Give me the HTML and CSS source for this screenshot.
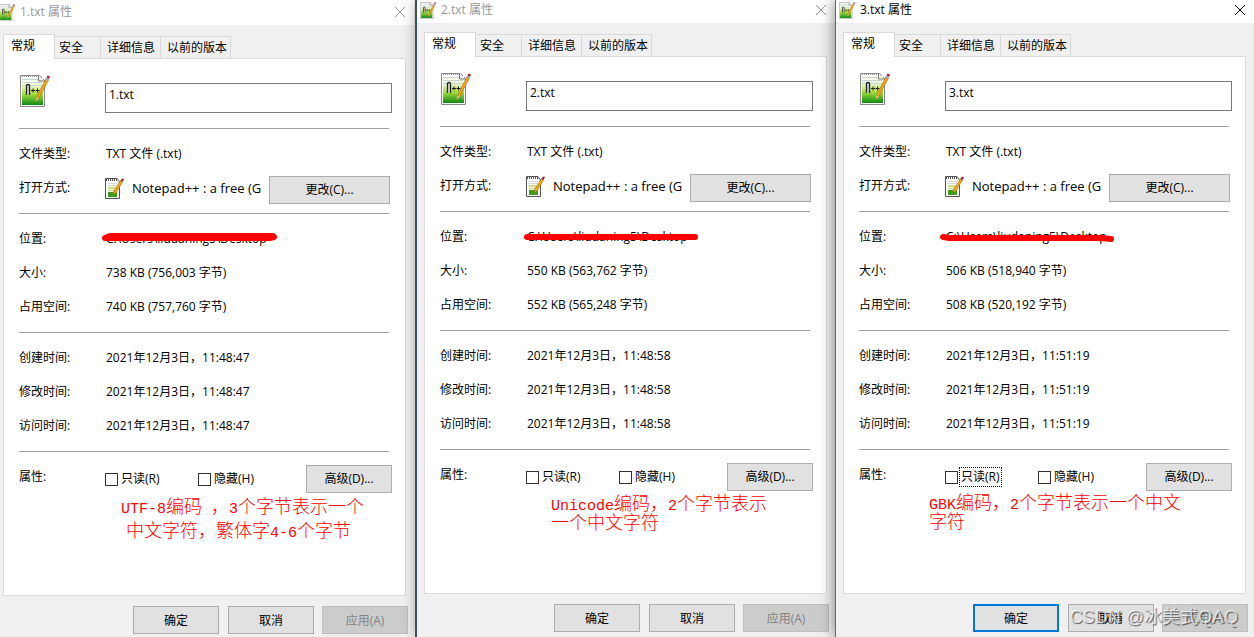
FILE: index.html
```html
<!DOCTYPE html>
<html lang="zh-CN">
<head>
    <meta charset="UTF-8">
    <meta name="viewport" content="width=device-width, initial-scale=1.0">
    <title>文件属性</title>
    <link rel="stylesheet" href="styles.css">
</head>
<body>
    <svg class="sprite" width="0" height="0" aria-hidden="true">
        <defs>
            <linearGradient id="green" x1="0" y1="0" x2="0" y2="1">
                <stop offset="0" stop-color="#ffffff"/>
                <stop offset="0.3" stop-color="#e9f5c8"/>
                <stop offset="0.6" stop-color="#a5dc3c"/>
                <stop offset="1" stop-color="#0b8a12"/>
            </linearGradient>
            <symbol id="notepad" viewBox="0 0 30 32">
                <path d="M0.5 0.5H19.5L24.5 5.5V31.5H0.5Z" fill="#fff" stroke="#8a8a8a"/>
                <rect x="2" y="3" width="21" height="27" fill="url(#green)"/>
                <path d="M2 4.5H18M2 7.5H22M2 10.5H22" stroke="#c4d6dc"/>
                <path d="M2 1.5H18" stroke="#999" stroke-dasharray="1 1"/>
                <path d="M18.500 1V6H24" fill="#eee" stroke="#777"/>
                <path d="M6.500 20V10.500Q6.500 9.500 8 9.500Q9.500 9.500 9.500 11V20" fill="#ddd" stroke="#222" stroke-width="1.300"/>
                <path d="M11 15.500H15M13 13.500V17.500M15.500 15.500H19.500M17.500 13.500V17.500" stroke="#222"/>
                <path d="M15.500 26.500L17 21.500L26 3.500L28.500 5L19 23Z" fill="#eda51b" stroke="#a86a12" stroke-width="0.600"/>
                <path d="M15.500 26.500L16.500 22.500L19 23.500Z" fill="#e5c28c"/>
                <path d="M25.500 4.500L26.500 2.500L29 4L28 6Z" fill="#9aa9bb"/>
                <path d="M26.500 2.500L27.500 0.500L30 1.500L29 4Z" fill="#b02a3c"/>
            </symbol>
            <symbol id="notepad-small" viewBox="0 0 19 21">
                <path d="M0.500 0.500H12L14.500 4V20.500H0.500Z" fill="#fff" stroke="#555"/>
                <path d="M1 2H12" stroke="#555" stroke-width="2" stroke-dasharray="1 1"/>
                <path d="M2 5.500H12M2 7.500H12" stroke="#d5dbdf"/>
                <path d="M3 9H12V18H3Z" fill="#c9dd8f"/>
                <path d="M3 14H12V19H3Z" fill="#3d9c1d"/>
                <path d="M3 11.500H9M3 13.500H8" stroke="#f4f8d0"/>
                <path d="M8 17L9 13L15.500 2.500L17.500 4L11 15Z" fill="#eda51b" stroke="#9b6012" stroke-width="0.500"/>
                <path d="M15.500 3L17 0.500L19 1L17.500 4Z" fill="#9c2433"/>
            </symbol>
            <symbol id="close" viewBox="0 0 12 12">
                <path d="M1 1L11 11M11 1L1 11" fill="none" stroke="currentColor"/>
            </symbol>
        </defs>
    </svg>

    <main class="desktop">
        <section class="window window-first">
            <header class="titlebar">
                <svg class="title-icon"><use href="#notepad"/></svg>
                <h2>1.txt 属性</h2>
                <button class="close" type="button" aria-label="关闭"><svg><use href="#close"/></svg></button>
            </header>
            <nav class="tabs">
                <button class="tab tab-active" type="button">常规</button>
                <button class="tab tab-security" type="button">安全</button>
                <button class="tab tab-details" type="button">详细信息</button>
                <button class="tab tab-versions" type="button">以前的版本</button>
            </nav>
            <div class="panel">
                <div class="file-head">
                    <svg class="file-icon"><use href="#notepad"/></svg>
                    <input class="file-name" type="text" value="1.txt" aria-label="文件名">
                </div>
                <hr>
                <div class="row"><span>文件类型:</span><span class="value">TXT 文件 (.txt)</span></div>
                <div class="row row-open">
                    <span>打开方式:</span>
                    <svg class="app-icon"><use href="#notepad-small"/></svg>
                    <span class="app-name">Notepad++ : a free (G</span>
                    <button class="btn btn-change" type="button">更改(C)...</button>
                </div>
                <hr>
                <div class="row">
                    <span>位置:</span>
                    <span class="value path">C:\Users\liudaning5\Desktop
                        <svg class="scribble" viewBox="0 0 176 12"><path d="M3 5L8 3H171L172 4L168 5H3Z"/></svg>
                    </span>
                </div>
                <div class="row"><span>大小:</span><span class="value">738 KB (756,003 字节)</span></div>
                <div class="row"><span>占用空间:</span><span class="value">740 KB (757,760 字节)</span></div>
                <hr>
                <div class="row"><span>创建时间:</span><span class="value">2021年12月3日，11:48:47</span></div>
                <div class="row"><span>修改时间:</span><span class="value">2021年12月3日，11:48:47</span></div>
                <div class="row"><span>访问时间:</span><span class="value">2021年12月3日，11:48:47</span></div>
                <hr>
                <div class="row row-attrs">
                    <span>属性:</span>
                    <label class="check"><input type="checkbox"><span>只读(R)</span></label>
                    <label class="check"><input type="checkbox"><span>隐藏(H)</span></label>
                    <button class="btn btn-advanced" type="button">高级(D)...</button>
                </div>
                <p class="note note-utf8"><span class="latin">UTF-8</span>编码<span class="note-rest">，<span class="latin">3</span>个字节表示一个</span><br><span class="note-line">中文字符，繁体字<span class="latin">4-6</span>个字节</span></p>
            </div>
            <footer class="actions">
                <button class="btn btn-ok" type="button">确定</button>
                <button class="btn" type="button">取消</button>
                <button class="btn" type="button" disabled>应用(A)</button>
            </footer>
        </section>

        <section class="window window-second">
            <header class="titlebar">
                <svg class="title-icon"><use href="#notepad"/></svg>
                <h2>2.txt 属性</h2>
                <button class="close" type="button" aria-label="关闭"><svg><use href="#close"/></svg></button>
            </header>
            <nav class="tabs">
                <button class="tab tab-active" type="button">常规</button>
                <button class="tab tab-security" type="button">安全</button>
                <button class="tab tab-details" type="button">详细信息</button>
                <button class="tab tab-versions" type="button">以前的版本</button>
            </nav>
            <div class="panel">
                <div class="file-head">
                    <svg class="file-icon"><use href="#notepad"/></svg>
                    <input class="file-name" type="text" value="2.txt" aria-label="文件名">
                </div>
                <hr>
                <div class="row"><span>文件类型:</span><span class="value">TXT 文件 (.txt)</span></div>
                <div class="row row-open">
                    <span>打开方式:</span>
                    <svg class="app-icon"><use href="#notepad-small"/></svg>
                    <span class="app-name">Notepad++ : a free (G</span>
                    <button class="btn btn-change" type="button">更改(C)...</button>
                </div>
                <hr>
                <div class="row">
                    <span>位置:</span>
                    <span class="value path">C:\Users\liudaning5\Desktop
                        <svg class="scribble" viewBox="0 0 176 12"><path d="M4 6H172"/></svg>
                    </span>
                </div>
                <div class="row"><span>大小:</span><span class="value">550 KB (563,762 字节)</span></div>
                <div class="row"><span>占用空间:</span><span class="value">552 KB (565,248 字节)</span></div>
                <hr>
                <div class="row"><span>创建时间:</span><span class="value">2021年12月3日，11:48:58</span></div>
                <div class="row"><span>修改时间:</span><span class="value">2021年12月3日，11:48:58</span></div>
                <div class="row"><span>访问时间:</span><span class="value">2021年12月3日，11:48:58</span></div>
                <hr>
                <div class="row row-attrs">
                    <span>属性:</span>
                    <label class="check"><input type="checkbox"><span>只读(R)</span></label>
                    <label class="check"><input type="checkbox"><span>隐藏(H)</span></label>
                    <button class="btn btn-advanced" type="button">高级(D)...</button>
                </div>
                <p class="note note-unicode"><span class="latin">Unicode</span>编码，<span class="latin">2</span>个字节表示<br>一个中文字符</p>
            </div>
            <footer class="actions">
                <button class="btn btn-ok" type="button">确定</button>
                <button class="btn" type="button">取消</button>
                <button class="btn" type="button" disabled>应用(A)</button>
            </footer>
        </section>

        <section class="window window-active">
            <header class="titlebar">
                <svg class="title-icon"><use href="#notepad"/></svg>
                <h2>3.txt 属性</h2>
                <button class="close" type="button" aria-label="关闭"><svg><use href="#close"/></svg></button>
            </header>
            <nav class="tabs">
                <button class="tab tab-active" type="button">常规</button>
                <button class="tab tab-security" type="button">安全</button>
                <button class="tab tab-details" type="button">详细信息</button>
                <button class="tab tab-versions" type="button">以前的版本</button>
            </nav>
            <div class="panel">
                <div class="file-head">
                    <svg class="file-icon"><use href="#notepad"/></svg>
                    <input class="file-name" type="text" value="3.txt" aria-label="文件名">
                </div>
                <hr>
                <div class="row"><span>文件类型:</span><span class="value">TXT 文件 (.txt)</span></div>
                <div class="row row-open">
                    <span>打开方式:</span>
                    <svg class="app-icon"><use href="#notepad-small"/></svg>
                    <span class="app-name">Notepad++ : a free (G</span>
                    <button class="btn btn-change" type="button">更改(C)...</button>
                </div>
                <hr>
                <div class="row">
                    <span>位置:</span>
                    <span class="value path">C:\Users\liudaning5\Desktop
                        <svg class="scribble" viewBox="0 0 176 12"><path d="M1 6L8 7H158L169 8"/></svg>
                    </span>
                </div>
                <div class="row"><span>大小:</span><span class="value">506 KB (518,940 字节)</span></div>
                <div class="row"><span>占用空间:</span><span class="value">508 KB (520,192 字节)</span></div>
                <hr>
                <div class="row"><span>创建时间:</span><span class="value">2021年12月3日，11:51:19</span></div>
                <div class="row"><span>修改时间:</span><span class="value">2021年12月3日，11:51:19</span></div>
                <div class="row"><span>访问时间:</span><span class="value">2021年12月3日，11:51:19</span></div>
                <hr>
                <div class="row row-attrs">
                    <span>属性:</span>
                    <label class="check check-focus"><input type="checkbox"><span>只读(R)</span></label>
                    <label class="check"><input type="checkbox"><span>隐藏(H)</span></label>
                    <button class="btn btn-advanced" type="button">高级(D)...</button>
                </div>
                <p class="note note-gbk"><span class="latin">GBK</span>编码，<span class="latin">2</span>个字节表示一个中文<br>字符</p>
            </div>
            <footer class="actions">
                <button class="btn btn-ok btn-default" type="button">确定</button>
                <button class="btn" type="button">取消</button>
                <button class="btn" type="button" disabled>应用(A)</button>
            </footer>
            <div class="watermark">CSDN @冰美式QAQ</div>
        </section>
    </main>
</body>
</html>
```

FILE: styles.css
```css
* {
    margin: 0;
    padding: 0;
    box-sizing: border-box;
}

body {
    background-color: #f0f0f0;
    color: #000;
    font-family: 'Open Sans', 'Noto Sans CJK SC', sans-serif;
    font-size: 12px;
    overflow-x: hidden;
}

button,
input {
    font: inherit;
    color: inherit;
}

.sprite {
    position: absolute;
}

.desktop {
    display: grid;
    grid-template-columns: 415fr 420fr 419fr;
    min-height: 100vh;
}

/* windows */
.window {
    position: relative;
    display: flex;
    flex-direction: column;
    min-width: 0;
    padding-bottom: 5px;
    background-color: #f0f0f0;
}

.window-first {
    margin-left: -4px;
    padding-right: 1px;
    padding-bottom: 3px;
}

.window-second {
    border-left: 2px solid #34526b;
    box-shadow: 0 0 12px rgba(0, 0, 0, 0.3);
}

.window-active {
    border-left: 1px solid #666;
    box-shadow: 0 0 14px rgba(0, 0, 0, 0.5);
}

.titlebar {
    display: flex;
    align-items: center;
    height: 23px;
    padding: 0 8px 3px 3px;
    background-color: #fff;
    color: #999;
}

.window-first .titlebar {
    height: 25px;
    padding-top: 2px;
}

.window-active .titlebar {
    color: #000;
}

.title-icon {
    width: 16px;
    height: 17px;
    margin-right: 5px;
}

.titlebar h2 {
    flex: 1;
    font-size: 12px;
    font-weight: normal;
    line-height: 18px;
}

.close {
    width: 12px;
    height: 12px;
    border: none;
    background: none;
}

.close svg {
    display: block;
    width: 12px;
    height: 12px;
}

/* tabs */
.tabs {
    position: relative;
    display: flex;
    align-items: flex-end;
    height: 34px;
    margin: 0 8px -1px 7px;
    padding-top: 9px;
}

.tab {
    height: 23px;
    border: 1px solid #d9d9d9;
    border-left: none;
    background-color: #f0f0f0;
    line-height: 21px;
    white-space: nowrap;
}

.tab-active {
    height: 25px;
    padding: 0 19px 3px 7px;
    border-left: 1px solid #d9d9d9;
    border-bottom: none;
    background-color: #fff;
}

.tab-security {
    padding: 0 17px 0 4px;
}

.tab-details {
    padding: 0 5px 0 6px;
}

.tab-versions {
    padding: 0 3px 0 6px;
}

.panel {
    flex: 1;
    margin: 0 8px 0 7px;
    padding: 16px 13px 0 15px;
    border: 1px solid #dcdcdc;
    background-color: #fff;
}

.file-head {
    display: flex;
    align-items: flex-start;
    padding-bottom: 7px;
}

.file-icon {
    width: 30px;
    height: 32px;
    margin: 0 55px 0 1px;
}

.file-name {
    flex: 1;
    min-width: 0;
    height: 30px;
    margin-top: 8px;
    padding: 0 3px 7px;
    border: 1px solid #7a7a7a;
    background-color: #fff;
}

hr {
    margin: 8px 3px 8px 0;
    border: none;
    border-top: 1px solid #a0a0a0;
}

.row {
    display: grid;
    grid-template-columns: 86px 1fr;
    align-items: center;
    height: 34px;
    line-height: 18px;
    white-space: nowrap;
}

.value {
    padding-left: 1px;
}

.row-open {
    grid-template-columns: 86px 27px 1fr 121px;
    margin-right: 2px;
}

.app-icon {
    width: 19px;
    height: 21px;
}

.app-name {
    margin-right: 7px;
    overflow: hidden;
    font-size: 13px;
}

.path {
    position: relative;
}

.scribble {
    position: absolute;
    top: 3px;
    left: -3px;
    width: 176px;
    height: 12px;
    overflow: visible;
    fill: none;
    stroke: #f00;
    stroke-width: 6px;
    stroke-linecap: round;
    stroke-linejoin: round;
}

.row-attrs {
    grid-template-columns: 86px 93px 1fr 86px;
}

.check {
    display: flex;
    align-items: center;
    gap: 2px;
    padding-top: 4px;
}

.check input {
    appearance: none;
    width: 13px;
    height: 13px;
    border: 1px solid #333;
    background-color: #fff;
}

.check span {
    padding: 0 1px;
}

.check-focus span {
    outline: 1px dotted #000;
}

/* buttons */
.btn {
    width: 86px;
    height: 28px;
    border: 1px solid #adadad;
    background-color: #e1e1e1;
    text-align: center;
}

.btn:disabled {
    border-color: #bfbfbf;
    background-color: #ccc;
    color: #838383;
}

.btn-change {
    width: 121px;
}

.btn-change,
.btn-advanced {
    align-self: end;
    margin-bottom: 1px;
}

.actions {
    display: flex;
    justify-content: flex-end;
    gap: 8px;
    padding: 10px 6px 0 0;
}

.btn-ok {
    margin-right: 1px;
}

.btn-default {
    border: 2px solid #0078d7;
}

/* red notes */
.note {
    color: #f00;
    font-family: 'Liberation Serif', 'Noto Sans CJK SC', serif;
    font-size: 18px;
    font-weight: 300;
    line-height: 18px;
    white-space: nowrap;
}

.note .latin {
    font-family: 'Liberation Mono', monospace;
    font-size: 15px;
    line-height: 1;
}

.note-utf8 {
    padding: 1px 0 0 102px;
    line-height: 24px;
}

.note-rest {
    padding-left: 9px;
}

.note-line {
    padding-left: 5px;
}

.note-unicode {
    padding: 3px 0 0 111px;
}

.note-gbk {
    padding: 2px 0 0 70px;
}

.watermark {
    position: absolute;
    right: 16px;
    bottom: 7px;
    color: rgba(255, 255, 255, 0.7);
    font-family: 'Liberation Sans', 'Noto Sans CJK SC', sans-serif;
    font-size: 18px;
    line-height: 26px;
    text-shadow: 1px 1px 1px rgba(0, 0, 0, 0.6);
    pointer-events: none;
}
```
